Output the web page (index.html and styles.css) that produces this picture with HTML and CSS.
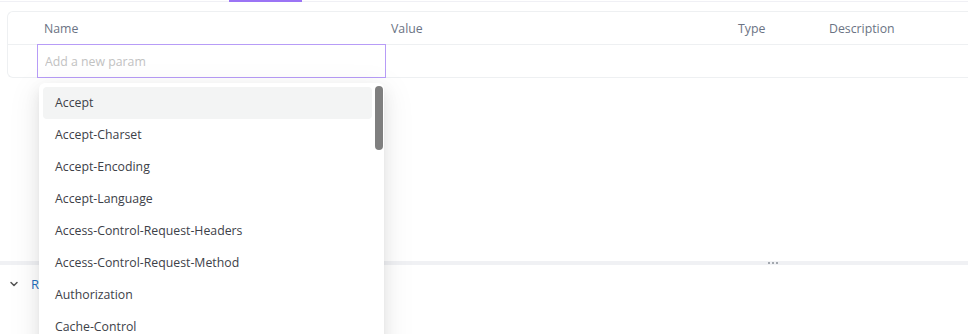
FILE: index.html
```html
<!DOCTYPE html>
<html>
<head>
	<meta charset="UTF-8">
	<title>Params</title>
	<link rel="stylesheet" href="styles.css">
</head>
<body>
    <div class="upper">
        <div class="tabbar">
            <i class="tab-active"></i>
        </div>
        <div class="params-card">
            <div class="row row-head">
                <div class="cell"></div>
                <div class="cell">Name</div>
                <div class="cell">Value</div>
                <div class="cell">Type</div>
                <div class="cell">Description</div>
            </div>
            <div class="row row-new">
                <div class="cell"></div>
                <div class="cell">
                    <input class="param-input" type="text" placeholder="Add a new param">
                </div>
            </div>
        </div>
        <div class="dropdown">
            <div class="dropdown-list">
                <div class="option active">Accept</div>
                <div class="option">Accept-Charset</div>
                <div class="option">Accept-Encoding</div>
                <div class="option">Accept-Language</div>
                <div class="option">Access-Control-Request-Headers</div>
                <div class="option">Access-Control-Request-Method</div>
                <div class="option">Authorization</div>
                <div class="option">Cache-Control</div>
            </div>
            <i class="scroll-thumb"></i>
        </div>
    </div>
    <div class="resizer">
        <span class="dots"><i></i><i></i><i></i></span>
    </div>
    <div class="lower">
        <div class="lower-head">
            <svg class="chevron" width="10" height="10" viewBox="0 0 10 10">
                <path d="M2 3.5 L5 6.5 L8 3.5" fill="none" stroke="#555" stroke-width="1.5" stroke-linecap="round" stroke-linejoin="round"/>
            </svg>
            <span class="lower-title">Response</span>
        </div>
    </div>
</body>
</html>
```

FILE: styles.css
```css
html {
    background-color: #fff;
}
body {
    margin: 0;
    padding: 0;
    height: 334px;
    font-family: "Open Sans", "Noto Sans", sans-serif;
    font-size: 12.3px;
    color: #333;
    background-color: #fff;
    overflow: hidden;
}
.upper {
    position: relative;
    height: 261px;
}
.tabbar {
    height: 1px;
    border-bottom: 1px solid #f0f0f5;
}
.tab-active {
    display: block;
    margin-left: 229px;
    width: 73px;
    height: 2px;
    background: #9b74f5;
}
.params-card {
    margin: 9px 0 0 7px;
    border: 1px solid #eef0f2;
    border-right: none;
    border-radius: 6px 0 0 6px;
}
.row {
    display: grid;
    grid-template-columns: 29px 347px 347px 91px 1fr;
    height: 32px;
    align-items: center;
}
.row-head {
    border-bottom: 1px solid #eef0f2;
    color: #6b7384;
}
.row-head .cell {
    padding-left: 7px;
}
.row-new {
    margin: -1px 0 -1px;
    height: 34px;
}
.row-new .cell:nth-child(2) {
    grid-column: 2 / 4;
}
.param-input {
    display: block;
    box-sizing: border-box;
    width: 349px;
    height: 34px;
    margin: 0;
    padding: 0 7px;
    border: 1px solid #b79cf7;
    outline: none;
    font-family: inherit;
    font-size: 12.3px;
    color: #333;
    background: #fff;
}
.param-input::placeholder {
    color: #c2c2c2;
}
.dropdown {
    position: absolute;
    left: 39px;
    top: 83px;
    width: 345px;
    height: 270px;
    background: #fff;
    border-radius: 6px;
    box-shadow: 0 6px 16px 0 rgba(0, 0, 0, .08), 0 3px 6px -4px rgba(0, 0, 0, .12), 0 9px 28px 8px rgba(0, 0, 0, .05);
    z-index: 3;
}
.dropdown-list {
    padding: 4px 12px 4px 4px;
}
.option {
    height: 32px;
    line-height: 32px;
    padding: 0 12px;
    border-radius: 4px;
    color: #3d4148;
    white-space: nowrap;
}
.option.active {
    background: #f3f4f4;
}
.scroll-thumb {
    position: absolute;
    right: 1px;
    top: 3px;
    width: 8px;
    height: 64px;
    border-radius: 4px;
    background: #7f7f7f;
}
.resizer {
    height: 4px;
    background: #f0f1f4;
}
.dots {
    display: flex;
    gap: 2px;
    justify-content: center;
    align-items: center;
    margin-left: 768px;
    width: 10px;
    height: 4px;
}
.dots i {
    width: 2px;
    height: 2px;
    border-radius: 1px;
    background: #8a8f98;
}
.lower {
    height: 69px;
}
.lower-head {
    display: flex;
    align-items: center;
    height: 38px;
    padding-left: 9px;
    gap: 12px;
}
.chevron {
    display: block;
    flex: none;
}
.lower-title {
    color: #1f6fc0;
    font-size: 13px;
}
```
